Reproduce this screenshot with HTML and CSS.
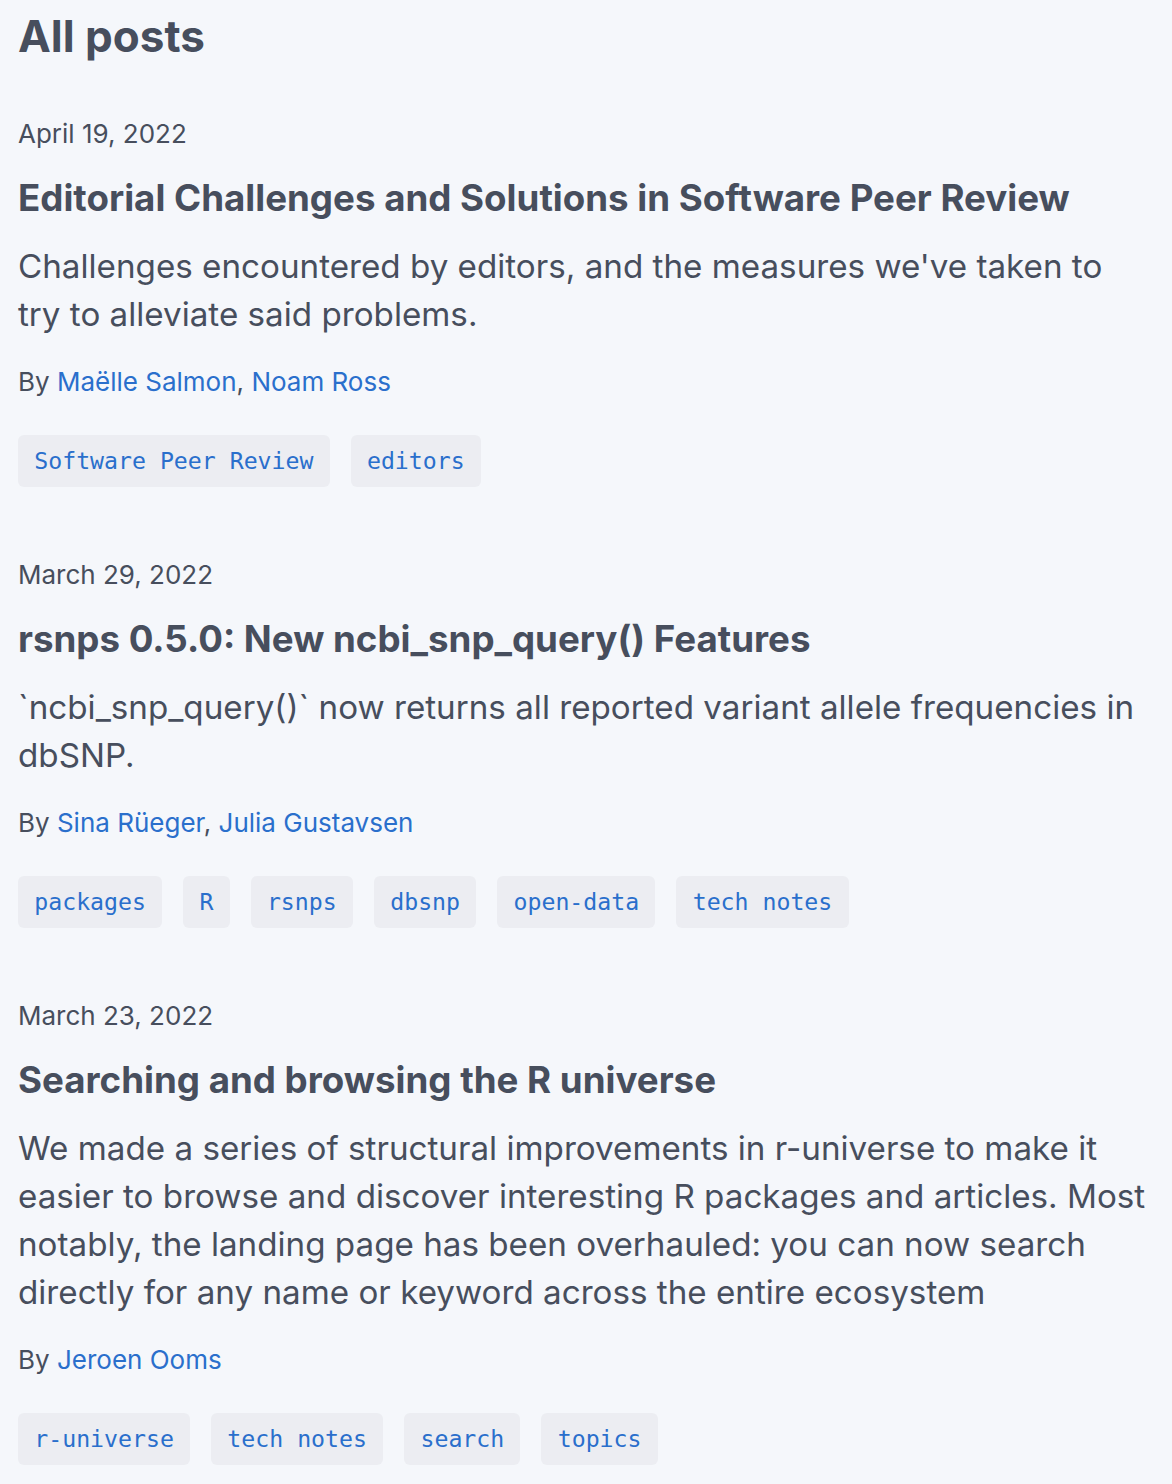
FILE: index.html
```html
<!DOCTYPE html>
<html>
<head>
<meta charset="utf-8">
<link rel="stylesheet" href="styles.css">
</head>
<body>
<main class="page">
  <h1 class="page-title">All posts</h1>

  <article class="post">
    <div class="date">April 19, 2022</div>
    <h2 class="title">Editorial Challenges and Solutions in Software Peer Review</h2>
    <p class="desc">Challenges encountered by editors, and the measures we've taken to try to alleviate said problems.</p>
    <div class="byline">By <a href="#">Maëlle Salmon</a>, <a href="#">Noam Ross</a></div>
    <ul class="tags">
      <li class="tag">Software Peer Review</li>
      <li class="tag">editors</li>
    </ul>
  </article>

  <article class="post">
    <div class="date">March 29, 2022</div>
    <h2 class="title">rsnps 0.5.0: New ncbi_snp_query() Features</h2>
    <p class="desc">`ncbi_snp_query()` now returns all reported variant allele frequencies in dbSNP.</p>
    <div class="byline">By <a href="#">Sina Rüeger</a>, <a href="#">Julia Gustavsen</a></div>
    <ul class="tags">
      <li class="tag">packages</li>
      <li class="tag">R</li>
      <li class="tag">rsnps</li>
      <li class="tag">dbsnp</li>
      <li class="tag">open-data</li>
      <li class="tag">tech notes</li>
    </ul>
  </article>

  <article class="post">
    <div class="date">March 23, 2022</div>
    <h2 class="title">Searching and browsing the R universe</h2>
    <p class="desc">We made a series of structural improvements in r-universe to make it easier to browse and discover interesting R packages and articles. Most notably, the landing page has been overhauled: you can now search directly for any name or keyword across the entire ecosystem</p>
    <div class="byline">By <a href="#">Jeroen Ooms</a></div>
    <ul class="tags">
      <li class="tag">r-universe</li>
      <li class="tag">tech notes</li>
      <li class="tag">search</li>
      <li class="tag">topics</li>
    </ul>
  </article>
</main>
</body>
</html>
```

FILE: styles.css
```css
html, body {
  margin: 0;
  padding: 0;
  background: #f5f7fb;
}

body {
  font-family: "Inter", "Lato", sans-serif;
  color: #474e5d;
}

.page {
  padding: 0 18px;
}

.page-title {
  margin: 0;
  padding-top: 8px;
  font-size: 44px;
  line-height: 56px;
  font-weight: 700;
  color: #474e5d;
}

.post {
  padding-top: 52px;
}

.post + .post {
  padding-top: 70px;
}

.date {
  font-size: 26px;
  line-height: 36px;
}

.title {
  margin: 24px 0 0;
  font-size: 36.7px;
  line-height: 44px;
  font-weight: 700;
}

.desc {
  margin: 22px 0 0;
  font-size: 33.2px;
  line-height: 48px;
}

.byline {
  margin-top: 26px;
  font-size: 26px;
  line-height: 36px;
}

.byline a {
  color: #2a6fcc;
  text-decoration: none;
}

.tags {
  list-style: none;
  margin: 35px 0 0;
  padding: 0;
  display: flex;
  flex-wrap: wrap;
  gap: 21px;
}

.tag {
  font-family: "DejaVu Sans Mono", monospace;
  font-size: 23.2px;
  line-height: 52px;
  padding: 0 16.25px;
  background: #ecedf2;
  border-radius: 6px;
  color: #2a6fcc;
}
```
